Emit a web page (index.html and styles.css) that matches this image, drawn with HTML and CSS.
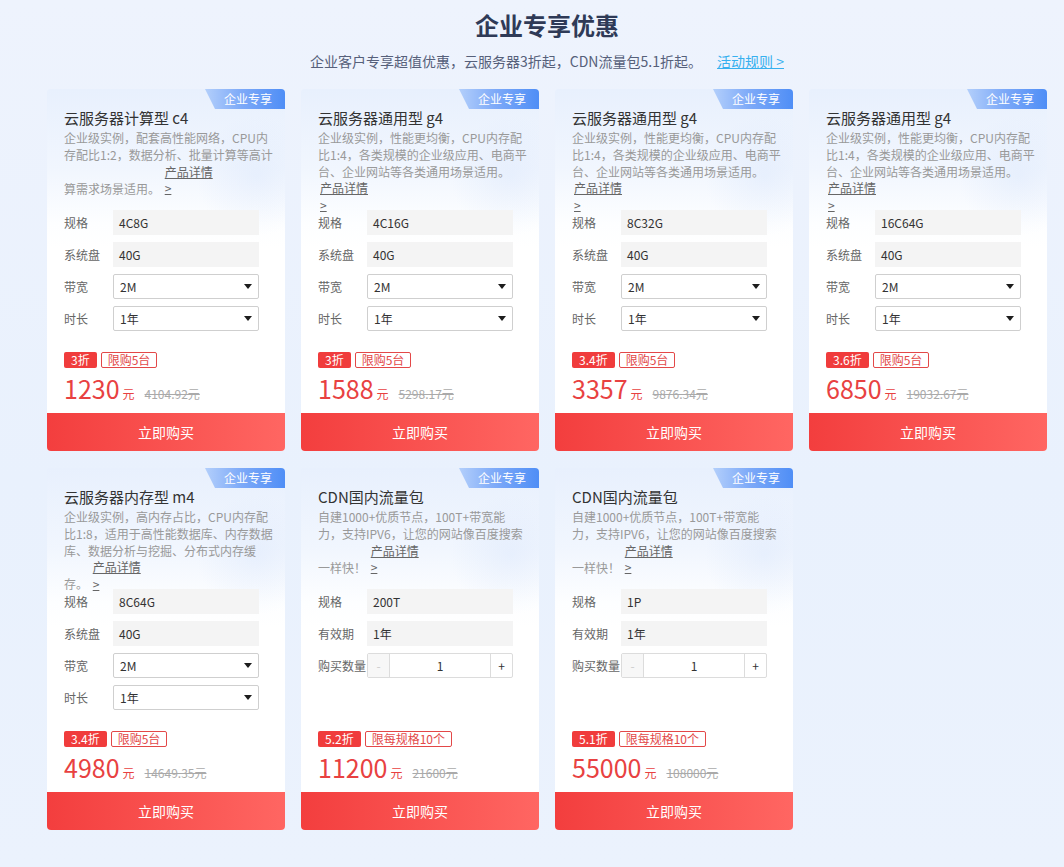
FILE: index.html
```html
<!DOCTYPE html>
<html lang="zh-CN">
  <head>
    <meta charset="UTF-8" />
    <meta name="viewport" content="width=device-width, initial-scale=1.0" />
    <title>企业专享优惠</title>
    <link rel="stylesheet" href="styles.css">
  </head>
  <body>
    <div class="wrap">
      <h1 class="title">企业专享优惠</h1>
      <p class="sub">
        企业客户专享超值优惠，云服务器3折起，CDN流量包5.1折起。
        <a href="#" class="rule">活动规则 &gt;</a>
      </p>

      <div class="grid">
        <!-- c4 -->
        <div class="card">
          <span class="tag">企业专享</span>
          <div class="head">
            <div class="name">云服务器计算型 c4</div>
            <p class="desc">企业级实例，配套高性能网络，CPU内<br>存配比1:2，数据分析、批量计算等高计<br>算需求场景适用。 <a href="#" class="more">产品详情 &gt;</a></p>
          </div>
          <div class="rows">
            <div class="row"><span class="lab">规格</span><span class="val">4C8G</span></div>
            <div class="row"><span class="lab">系统盘</span><span class="val">40G</span></div>
            <div class="row"><span class="lab">带宽</span><span class="sel">2M<i class="arrow"></i></span></div>
            <div class="row"><span class="lab">时长</span><span class="sel">1年<i class="arrow"></i></span></div>
          </div>
          <div class="price">
            <div class="badges"><span class="off">3折</span><span class="limit">限购5台</span></div>
            <div class="amount"><b>1230</b><span class="unit">元</span><s>4104.92元</s></div>
          </div>
          <button class="buy">立即购买</button>
        </div>

        <!-- g4 4C16G -->
        <div class="card">
          <span class="tag">企业专享</span>
          <div class="head">
            <div class="name">云服务器通用型 g4</div>
            <p class="desc">企业级实例，性能更均衡，CPU内存配<br>比1:4，各类规模的企业级应用、电商平<br>台、企业网站等各类通用场景适用。 <a href="#" class="more">产品详情 &gt;</a></p>
          </div>
          <div class="rows">
            <div class="row"><span class="lab">规格</span><span class="val">4C16G</span></div>
            <div class="row"><span class="lab">系统盘</span><span class="val">40G</span></div>
            <div class="row"><span class="lab">带宽</span><span class="sel">2M<i class="arrow"></i></span></div>
            <div class="row"><span class="lab">时长</span><span class="sel">1年<i class="arrow"></i></span></div>
          </div>
          <div class="price">
            <div class="badges"><span class="off">3折</span><span class="limit">限购5台</span></div>
            <div class="amount"><b>1588</b><span class="unit">元</span><s>5298.17元</s></div>
          </div>
          <button class="buy">立即购买</button>
        </div>

        <!-- g4 8C32G -->
        <div class="card">
          <span class="tag">企业专享</span>
          <div class="head">
            <div class="name">云服务器通用型 g4</div>
            <p class="desc">企业级实例，性能更均衡，CPU内存配<br>比1:4，各类规模的企业级应用、电商平<br>台、企业网站等各类通用场景适用。 <a href="#" class="more">产品详情 &gt;</a></p>
          </div>
          <div class="rows">
            <div class="row"><span class="lab">规格</span><span class="val">8C32G</span></div>
            <div class="row"><span class="lab">系统盘</span><span class="val">40G</span></div>
            <div class="row"><span class="lab">带宽</span><span class="sel">2M<i class="arrow"></i></span></div>
            <div class="row"><span class="lab">时长</span><span class="sel">1年<i class="arrow"></i></span></div>
          </div>
          <div class="price">
            <div class="badges"><span class="off">3.4折</span><span class="limit">限购5台</span></div>
            <div class="amount"><b>3357</b><span class="unit">元</span><s>9876.34元</s></div>
          </div>
          <button class="buy">立即购买</button>
        </div>

        <!-- g4 16C64G -->
        <div class="card">
          <span class="tag">企业专享</span>
          <div class="head">
            <div class="name">云服务器通用型 g4</div>
            <p class="desc">企业级实例，性能更均衡，CPU内存配<br>比1:4，各类规模的企业级应用、电商平<br>台、企业网站等各类通用场景适用。 <a href="#" class="more">产品详情 &gt;</a></p>
          </div>
          <div class="rows">
            <div class="row"><span class="lab">规格</span><span class="val">16C64G</span></div>
            <div class="row"><span class="lab">系统盘</span><span class="val">40G</span></div>
            <div class="row"><span class="lab">带宽</span><span class="sel">2M<i class="arrow"></i></span></div>
            <div class="row"><span class="lab">时长</span><span class="sel">1年<i class="arrow"></i></span></div>
          </div>
          <div class="price">
            <div class="badges"><span class="off">3.6折</span><span class="limit">限购5台</span></div>
            <div class="amount"><b>6850</b><span class="unit">元</span><s>19032.67元</s></div>
          </div>
          <button class="buy">立即购买</button>
        </div>

        <!-- m4 -->
        <div class="card">
          <span class="tag">企业专享</span>
          <div class="head">
            <div class="name">云服务器内存型 m4</div>
            <p class="desc">企业级实例，高内存占比，CPU内存配<br>比1:8，适用于高性能数据库、内存数据<br>库、数据分析与挖掘、分布式内存缓<br>存。 <a href="#" class="more">产品详情 &gt;</a></p>
          </div>
          <div class="rows">
            <div class="row"><span class="lab">规格</span><span class="val">8C64G</span></div>
            <div class="row"><span class="lab">系统盘</span><span class="val">40G</span></div>
            <div class="row"><span class="lab">带宽</span><span class="sel">2M<i class="arrow"></i></span></div>
            <div class="row"><span class="lab">时长</span><span class="sel">1年<i class="arrow"></i></span></div>
          </div>
          <div class="price">
            <div class="badges"><span class="off">3.4折</span><span class="limit">限购5台</span></div>
            <div class="amount"><b>4980</b><span class="unit">元</span><s>14649.35元</s></div>
          </div>
          <button class="buy">立即购买</button>
        </div>

        <!-- CDN 200T -->
        <div class="card">
          <span class="tag">企业专享</span>
          <div class="head">
            <div class="name">CDN国内流量包</div>
            <p class="desc">自建1000+优质节点，100T+带宽能<br>力，支持IPV6，让您的网站像百度搜索<br>一样快！ <a href="#" class="more">产品详情 &gt;</a></p>
          </div>
          <div class="rows">
            <div class="row"><span class="lab">规格</span><span class="val">200T</span></div>
            <div class="row"><span class="lab">有效期</span><span class="val">1年</span></div>
            <div class="row">
              <span class="lab">购买数量</span>
              <span class="step"><span class="minus">-</span><span class="num">1</span><span class="plus">+</span></span>
            </div>
          </div>
          <div class="price">
            <div class="badges"><span class="off">5.2折</span><span class="limit">限每规格10个</span></div>
            <div class="amount"><b>11200</b><span class="unit">元</span><s>21600元</s></div>
          </div>
          <button class="buy">立即购买</button>
        </div>

        <!-- CDN 1P -->
        <div class="card">
          <span class="tag">企业专享</span>
          <div class="head">
            <div class="name">CDN国内流量包</div>
            <p class="desc">自建1000+优质节点，100T+带宽能<br>力，支持IPV6，让您的网站像百度搜索<br>一样快！ <a href="#" class="more">产品详情 &gt;</a></p>
          </div>
          <div class="rows">
            <div class="row"><span class="lab">规格</span><span class="val">1P</span></div>
            <div class="row"><span class="lab">有效期</span><span class="val">1年</span></div>
            <div class="row">
              <span class="lab">购买数量</span>
              <span class="step"><span class="minus">-</span><span class="num">1</span><span class="plus">+</span></span>
            </div>
          </div>
          <div class="price">
            <div class="badges"><span class="off">5.1折</span><span class="limit">限每规格10个</span></div>
            <div class="amount"><b>55000</b><span class="unit">元</span><s>108000元</s></div>
          </div>
          <button class="buy">立即购买</button>
        </div>
      </div>
    </div>
  </body>
</html>
```

FILE: styles.css
```css
* {
  margin: 0;
  padding: 0;
  box-sizing: border-box;
}

body {
  font-family: "Noto Sans CJK SC", "Noto Sans", sans-serif;
  background: linear-gradient(180deg, #eef3fd 0%, #e9f1fd 55%, #ebf2fd 100%);
  min-height: 867px;
  color: #333;
}

.wrap {
  width: 1000px;
  margin-left: 47px;
  padding-top: 9px;
}

.title {
  font-size: 24px;
  line-height: 32px;
  font-weight: bold;
  color: #2f3a57;
  text-align: center;
}

.sub {
  margin-top: 10px;
  font-size: 14px;
  line-height: 20px;
  color: #56607a;
  text-align: center;
}

.rule {
  margin-left: 12px;
  color: #36b0ef;
}

.grid {
  margin-top: 18px;
  display: grid;
  grid-template-columns: repeat(4, 238px);
  gap: 17px 16px;
}

.card {
  position: relative;
  height: 362px;
  display: flex;
  flex-direction: column;
  border-radius: 4px;
  background:
    radial-gradient(circle at 88% 24%, rgba(210, 225, 251, 0.35) 0, rgba(220, 232, 252, 0) 60px),
    linear-gradient(180deg, #e8f0fd 0, #f1f6fe 80px, #fdfeff 135px, #fff 160px);
}

.tag {
  position: absolute;
  top: 0;
  right: 0;
  width: 80px;
  height: 20px;
  padding-right: 13px;
  text-align: right;
  font-size: 12px;
  line-height: 20px;
  color: #fff;
  border-top-right-radius: 4px;
  background: linear-gradient(90deg, #b3cffb 0%, #7eaaf8 45%, #4f8ef6 100%);
  clip-path: polygon(0 0, 100% 0, 100% 100%, 10px 100%);
}

.head {
  height: 121px;
  padding: 18px 5px 0 17px;
}

.name {
  font-size: 15px;
  line-height: 22px;
  color: #333;
}

.desc {
  margin-top: 1px;
  font-size: 12px;
  line-height: 16.8px;
  color: #999;
}

.more {
  display: inline-block;
  width: 50px;
  margin-left: 2px;
  color: #666;
  text-decoration: underline;
}

.rows {
  padding: 0 10px 0 17px;
  display: flex;
  flex-direction: column;
  gap: 7px;
}

.row {
  display: flex;
  align-items: center;
  height: 25px;
  font-size: 12px;
}

.lab {
  width: 49px;
  color: #666;
}

.val,
.sel {
  width: 146px;
  height: 25px;
  line-height: 25px;
  padding-left: 6px;
  color: #333;
}

.val {
  background: #f4f4f4;
}

.sel {
  position: relative;
  border: 1px solid #cfcfcf;
  border-radius: 2px;
  line-height: 23px;
  background: #fff;
}

.arrow {
  position: absolute;
  right: 6px;
  top: 9px;
  border-left: 4px solid transparent;
  border-right: 4px solid transparent;
  border-top: 5px solid #1d1d1d;
}

.step {
  display: flex;
  width: 146px;
  height: 25px;
  border: 1px solid #dcdcdc;
  border-radius: 2px;
  line-height: 23px;
  text-align: center;
}

.minus {
  width: 22px;
  background: #f7f7f7;
  color: #ccc;
  border-right: 1px solid #dcdcdc;
}

.num {
  flex: 1;
  color: #333;
}

.plus {
  width: 22px;
  color: #333;
  border-left: 1px solid #dcdcdc;
}

.price {
  margin-top: auto;
  padding: 0 10px 9px 17px;
}

.badges {
  display: flex;
  gap: 4px;
  font-size: 12px;
  line-height: 16px;
}

.off {
  padding: 0 7px;
  height: 16px;
  background: #f03c3c;
  color: #fff;
  border-radius: 2px;
}

.limit {
  padding: 0 6px;
  height: 16px;
  line-height: 14px;
  border: 1px solid #e34848;
  color: #e34848;
  border-radius: 2px;
}

.amount {
  margin-top: 4px;
  height: 32px;
  line-height: 32px;
  color: #e84141;
}

.amount b {
  font-size: 25px;
  font-weight: normal;
}

.unit {
  margin-left: 3px;
  font-size: 12px;
}

.amount s {
  margin-left: 10px;
  font-size: 12px;
  color: #aaa;
}

.buy {
  height: 38px;
  border: none;
  border-radius: 0 0 4px 4px;
  background: linear-gradient(90deg, #f33e3e 0%, #ff6662 100%);
  color: #fff;
  font-family: inherit;
  font-size: 14px;
  cursor: pointer;
}
```
